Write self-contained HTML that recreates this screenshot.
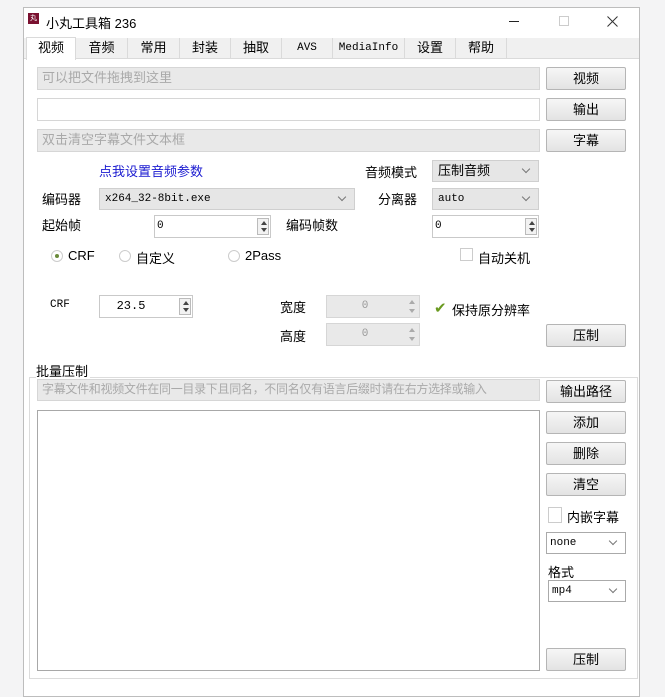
<!DOCTYPE html>
<html><head><meta charset="utf-8"><style>
*{box-sizing:border-box;margin:0;padding:0}
body{width:665px;height:685px;background:#f4f4f5;position:relative;overflow:hidden;font-family:"Liberation Sans","Noto Sans CJK SC",sans-serif;font-size:13px;color:#000}
.a{position:absolute}
.win{left:23px;top:7px;width:617px;height:690px;background:#fff;border:1px solid #bdbdbd}
.fld{position:absolute;background:#e9e9e9;border:1px solid #d6d6d6;color:#a9a9a9;font-size:13px;padding:2px 4px;line-height:16px}
.wf{position:absolute;background:#fff;border:1px solid #c9c9c9}
.btn{position:absolute;width:80px;height:23px;border:1px solid #b5b5b5;border-radius:2px;background:linear-gradient(#f6f6f6,#e3e3e3);text-align:center;line-height:21px;font-size:13px}
.tab{position:absolute;top:38px;height:21px;border-right:1px solid #dadada;line-height:20px;text-align:center;font-size:13px}
.sel{position:absolute;background:#e6e6e6;border:1px solid #cfcfcf;font-size:12px;padding-left:5px}
.sel:after{content:"";position:absolute;right:9px;top:5px;width:5px;height:5px;border-right:1px solid #777;border-bottom:1px solid #777;transform:rotate(45deg)}
.mono{font-family:"Liberation Mono",monospace;font-size:11px}
.spin{position:absolute;right:1px;top:2px;width:12px;height:17px;border:1px solid #bbb;background:#f2f2f2}
.spin:before{content:"";position:absolute;left:3px;top:2px;border:3px solid transparent;border-bottom:4px solid #444;border-top:0}
.spin:after{content:"";position:absolute;left:3px;bottom:2px;border:3px solid transparent;border-top:4px solid #444;border-bottom:0}
.dis .spin:before{border-bottom-color:#aaa}.dis .spin:after{border-top-color:#aaa}
.cb{position:absolute;width:13px;height:13px;border:1px solid #ccc;background:#fff}
.rd{position:absolute;width:12px;height:12px;border:1px solid #ccc;border-radius:50%;background:#fff}
</style></head><body>
<div class="a win"></div>
<div class="a" style="left:28px;top:13px;width:11px;height:11px;background:#7a1130;color:#fff;font-size:7px;line-height:11px;text-align:center">丸</div>
<div class="a" style="left:46px;top:13px;font-size:13px">小丸工具箱 236</div>
<div class="a" style="left:509px;top:21px;width:10px;height:1px;background:#222"></div>
<div class="a" style="left:559px;top:16px;width:10px;height:10px;border:1px solid #ccc"></div>
<svg class="a" style="left:607px;top:16px" width="11" height="11"><path d="M0.5 0.5L10.5 10.5M10.5 0.5L0.5 10.5" stroke="#333" stroke-width="1"/></svg>
<div class="a" style="left:24px;top:38px;width:615px;height:21px;background:#f0f0f0;border-bottom:1px solid #dadada"></div>
<div class="tab" style="left:26px;width:50px;background:#fff;top:37px;height:23px;border:1px solid #dadada;border-bottom:none">视频</div>
<div class="tab" style="left:76px;width:52px">音频</div>
<div class="tab" style="left:128px;width:52px">常用</div>
<div class="tab" style="left:180px;width:51px">封装</div>
<div class="tab" style="left:231px;width:51px">抽取</div>
<div class="tab mono" style="left:282px;width:51px">AVS</div>
<div class="tab mono" style="left:333px;width:72px">MediaInfo</div>
<div class="tab" style="left:405px;width:51px">设置</div>
<div class="tab" style="left:456px;width:51px">帮助</div>

<div class="fld" style="left:37px;top:67px;width:503px;height:23px">可以把文件拖拽到这里</div>
<div class="wf" style="left:37px;top:98px;width:503px;height:23px;border-color:#d6d6d6"></div>
<div class="fld" style="left:37px;top:129px;width:503px;height:23px">双击清空字幕文件文本框</div>
<div class="btn" style="left:546px;top:67px">视频</div>
<div class="btn" style="left:546px;top:98px">输出</div>
<div class="btn" style="left:546px;top:129px">字幕</div>

<div class="a" style="left:99px;top:161px;color:#1a1ad0">点我设置音频参数</div>
<div class="a" style="left:365px;top:162px">音频模式</div>
<div class="sel" style="left:432px;top:160px;width:107px;height:22px;font-size:13px;line-height:20px">压制音频</div>
<div class="a" style="left:42px;top:189px">编码器</div>
<div class="sel mono" style="left:99px;top:188px;width:256px;height:22px;line-height:20px">x264_32-8bit.exe</div>
<div class="a" style="left:378px;top:189px">分离器</div>
<div class="sel mono" style="left:432px;top:188px;width:107px;height:22px;line-height:20px">auto</div>
<div class="a" style="left:42px;top:215px">起始帧</div>
<div class="wf mono" style="left:154px;top:215px;width:117px;height:23px;line-height:21px;padding-left:2px">0<div class="spin"></div></div>
<div class="a" style="left:286px;top:215px">编码帧数</div>
<div class="wf mono" style="left:432px;top:215px;width:107px;height:23px;line-height:21px;padding-left:2px">0<div class="spin"></div></div>

<div class="rd" style="left:51px;top:250px"><div class="a" style="left:3px;top:3px;width:4px;height:4px;border-radius:50%;background:#6a8a3a"></div></div>
<div class="a" style="left:68px;top:248px">CRF</div>
<div class="rd" style="left:119px;top:250px"></div>
<div class="a" style="left:136px;top:248px">自定义</div>
<div class="rd" style="left:228px;top:250px"></div>
<div class="a" style="left:245px;top:248px">2Pass</div>
<div class="cb" style="left:460px;top:248px"></div>
<div class="a" style="left:478px;top:248px">自动关机</div>

<div class="a mono" style="left:50px;top:299px">CRF</div>
<div class="wf mono" style="left:99px;top:295px;width:94px;height:23px;line-height:21px;text-align:center;padding-right:30px;font-size:12px">23.5<div class="spin"></div></div>
<div class="a" style="left:280px;top:297px">宽度</div>
<div class="fld dis mono" style="left:326px;top:295px;width:94px;height:23px;text-align:center;padding-right:20px;color:#999">0<div class="spin" style="border:none;background:none"></div></div>
<div class="a" style="left:434px;top:302px;width:13px;height:13px;color:#6a9a20;font-size:15px;line-height:13px">✔</div>
<div class="a" style="left:452px;top:300px">保持原分辨率</div>
<div class="a" style="left:280px;top:326px">高度</div>
<div class="fld dis mono" style="left:326px;top:323px;width:94px;height:23px;text-align:center;padding-right:20px;color:#999">0<div class="spin" style="border:none;background:none"></div></div>
<div class="btn" style="left:546px;top:324px">压制</div>

<div class="a" style="left:29px;top:377px;width:609px;height:302px;border:1px solid #dcdcdc"></div>
<div class="a" style="left:36px;top:361px;background:#fff;padding-right:2px">批量压制</div>
<div class="fld" style="left:37px;top:379px;width:503px;height:22px;font-size:12px;line-height:15px;white-space:nowrap;overflow:hidden;letter-spacing:-.3px">字幕文件和视频文件在同一目录下且同名，不同名仅有语言后缀时请在右方选择或输入</div>
<div class="wf" style="left:37px;top:410px;width:503px;height:261px;border-color:#a8a8a8"></div>
<div class="btn" style="left:546px;top:380px">输出路径</div>
<div class="btn" style="left:546px;top:411px">添加</div>
<div class="btn" style="left:546px;top:442px">删除</div>
<div class="btn" style="left:546px;top:473px">清空</div>
<div class="cb" style="left:548px;top:507px;width:14px;height:16px"></div>
<div class="a" style="left:567px;top:507px">内嵌字幕</div>
<div class="wf mono" style="left:546px;top:532px;width:80px;height:22px;line-height:20px;padding-left:3px;border-color:#aaa">none<div class="sel" style="right:0;top:0;width:20px;height:20px;background:none;border:none"></div></div>
<div class="a" style="left:548px;top:562px">格式</div>
<div class="wf mono" style="left:548px;top:580px;width:78px;height:22px;line-height:20px;padding-left:3px;border-color:#aaa">mp4<div class="sel" style="right:0;top:0;width:20px;height:20px;background:none;border:none"></div></div>
<div class="btn" style="left:546px;top:648px">压制</div>
</body></html>
